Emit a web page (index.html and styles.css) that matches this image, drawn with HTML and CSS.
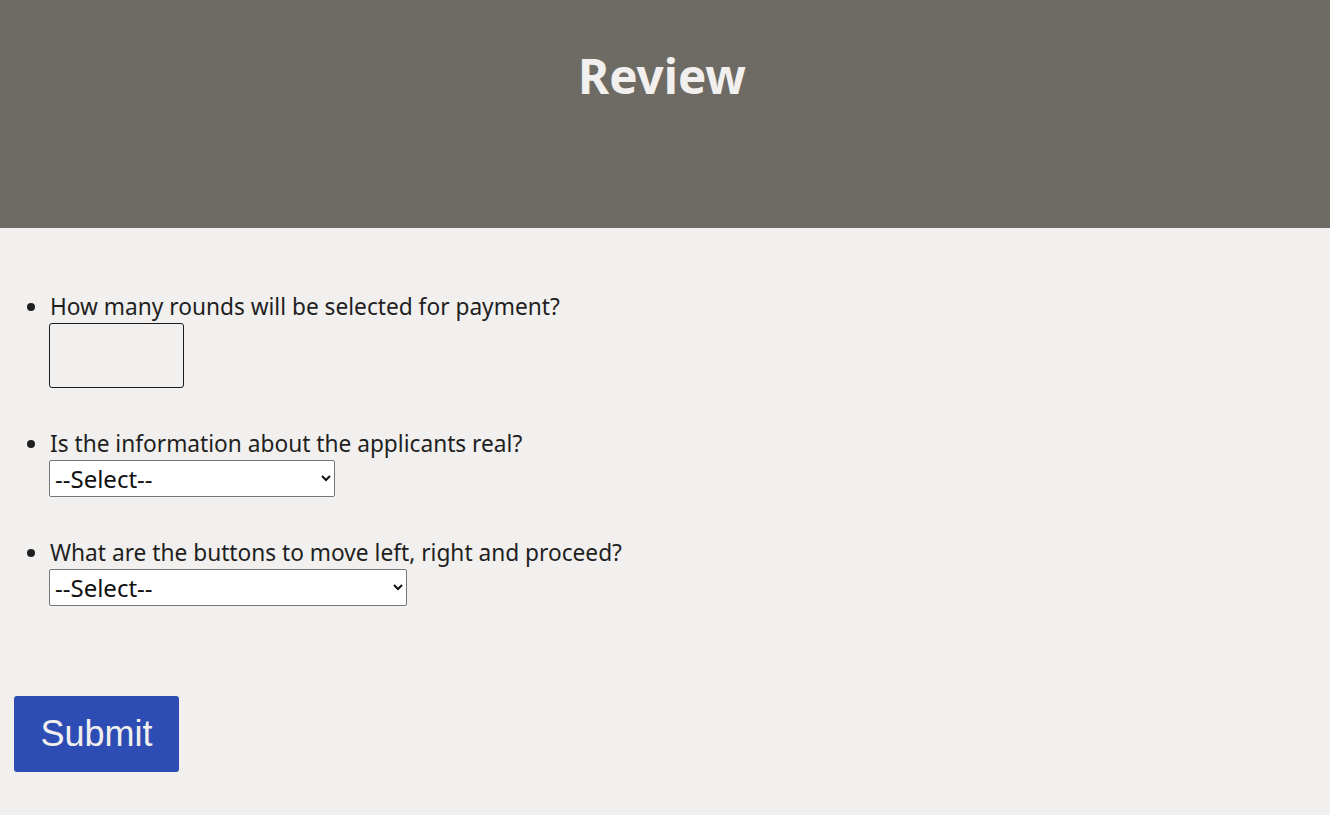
FILE: index.html
```html
<!DOCTYPE html>
<html>
<head>
<meta charset="utf-8">
<link rel="stylesheet" href="styles.css">
</head>
<body>
<header class="top">
  <h1 class="title">Review</h1>
</header>
<main class="content">
  <ul class="questions">
    <li class="q">
      <label class="q-label">How many rounds will be selected for payment?</label>
      <input class="q-num" type="text">
    </li>
    <li class="q">
      <label class="q-label">Is the information about the applicants real?</label>
      <select class="q-select q-select-a"><option>--Select--</option></select>
    </li>
    <li class="q">
      <label class="q-label">What are the buttons to move left, right and proceed?</label>
      <select class="q-select q-select-b"><option>--Select--</option></select>
    </li>
  </ul>
  <button class="submit" type="button">Submit</button>
</main>
</body>
</html>
```

FILE: styles.css
```css
html, body {
  margin: 0;
  padding: 0;
  background: #f2f0ee;
  font-family: "Segoe UI", "Noto Sans", "Open Sans", sans-serif;
  color: #1f1f1f;
}
.top {
  height: 228px;
  background: #6e6b64;
  display: flex;
  justify-content: center;
}
.title {
  margin: 45px 6px 0 0;
  font-size: 47.5px;
  font-weight: 700;
  line-height: 62px;
  color: #f2f0ee;
}
.content {
  padding: 63px 14px 43px;
}
.questions {
  margin: 0;
  padding-left: 36px;
  font-size: 22.7px;
  line-height: 30px;
}
.q {
  margin-bottom: 40px;
}
.q:last-child {
  margin-bottom: 90px;
}
.q-label {
  display: block;
  padding-top: 1px;
}
.q-num {
  display: block;
  box-sizing: border-box;
  width: 135px;
  height: 65px;
  margin: 1px 0 0 -1px;
  border: 1px solid #1a1a1a;
  border-radius: 3px;
  background: #f2f0ee;
}
.q-select {
  display: block;
  box-sizing: border-box;
  height: 37px;
  margin: 1px 0 0 -1px;
  font-family: inherit;
  font-size: 24px;
  color: #111;
  background: #fff;
  border: 1px solid #767676;
  border-radius: 2px;
  padding: 0 2px 0 1px;
}
.q-select-a { width: 286px; }
.q-select-b { width: 358px; }
.submit {
  display: block;
  width: 165px;
  height: 76px;
  border: none;
  border-radius: 3px;
  background: #2d4db5;
  color: #f2f0ee;
  font-family: "Liberation Sans", Arial, sans-serif;
  font-size: 36px;
  padding: 0;
}
```
